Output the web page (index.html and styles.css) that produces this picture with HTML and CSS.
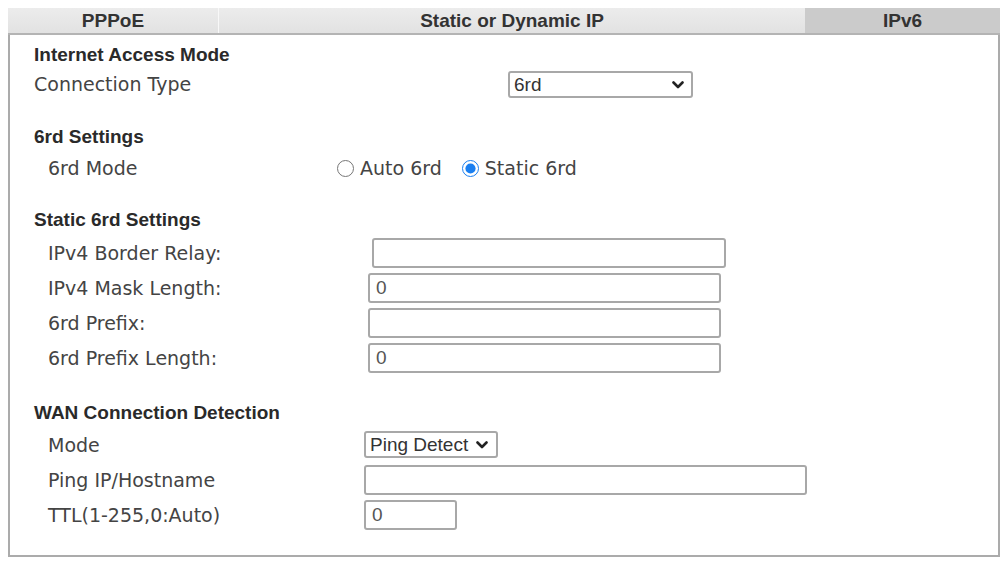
FILE: index.html
```html
<!DOCTYPE html>
<html lang="en">

<head>
  <meta charset="utf-8">
  <title>WAN IPv6</title>
  <link rel="stylesheet" href="styles.css">
</head>

<body>
  <div class="wan">
    <!-- tabs -->
    <div class="tabs">
      <div class="tab tab-pppoe">PPPoE</div>
      <div class="tab tab-ip">Static or Dynamic IP</div>
      <div class="tab tab-v6 active">IPv6</div>
    </div>

    <div class="panel">
      <!-- Internet Access Mode -->
      <div class="head">Internet Access Mode</div>
      <div class="row sec-mode">
        <div class="label flush">Connection Type</div>
        <span class="pick">
          <select class="select select-type">
            <option>6rd</option>
          </select>
          <svg class="chev" width="12" height="8" viewBox="0 0 12 8"><path d="M1.5 1.5 L6 6 L10.5 1.5" fill="none" stroke="#222" stroke-width="2.6" stroke-linecap="round" stroke-linejoin="round"/></svg>
        </span>
      </div>

      <!-- 6rd Settings -->
      <div class="head gap-6rd">6rd Settings</div>
      <div class="row row-radio sec-6rd">
        <div class="label">6rd Mode</div>
        <div class="radios">
          <label class="opt"><input type="radio" name="mode"><span>Auto 6rd</span></label>
          <label class="opt"><input type="radio" name="mode" checked><span>Static 6rd</span></label>
        </div>
      </div>

      <!-- Static 6rd Settings -->
      <div class="head head-static gap-static">Static 6rd Settings</div>
      <div class="row row-input sec-static">
        <div class="label">IPv4 Border Relay:</div>
        <input type="text" class="text text-relay">
      </div>
      <div class="row row-input sec-static">
        <div class="label">IPv4 Mask Length:</div>
        <input type="text" class="text text-long" value="0">
      </div>
      <div class="row row-input sec-static">
        <div class="label">6rd Prefix:</div>
        <input type="text" class="text text-long">
      </div>
      <div class="row row-input sec-static">
        <div class="label">6rd Prefix Length:</div>
        <input type="text" class="text text-long" value="0">
      </div>

      <!-- WAN Connection Detection -->
      <div class="head gap-wan">WAN Connection Detection</div>
      <div class="row row-input sec-wan">
        <div class="label">Mode</div>
        <span class="pick pick-ping">
          <select class="select select-ping">
            <option>Ping Detect</option>
          </select>
          <svg class="chev" width="12" height="8" viewBox="0 0 12 8"><path d="M1.5 1.5 L6 6 L10.5 1.5" fill="none" stroke="#222" stroke-width="2.6" stroke-linecap="round" stroke-linejoin="round"/></svg>
        </span>
      </div>
      <div class="row row-input sec-wan">
        <div class="label">Ping IP/Hostname</div>
        <input type="text" class="text text-host">
      </div>
      <div class="row row-input sec-wan">
        <div class="label">TTL(1-255,0:Auto)</div>
        <input type="text" class="text text-ttl" value="0">
      </div>
    </div>
  </div>
</body>

</html>
```

FILE: styles.css
```css
body {
  margin: 0;
  background: #fff;
  font-family: "DejaVu Sans", Verdana, sans-serif;
  color: #3c3c3c;
}

.wan {
  margin: 8px 0 0 8px;
  width: 992px;
}

/* tabs */
.tabs {
  display: flex;
  height: 25px;
  background: linear-gradient(#ececec, #e2e2e2);
  border-bottom: 2px solid #b4b4b4;
}

.tab {
  font-family: "Liberation Sans", Arial, sans-serif;
  font-weight: bold;
  font-size: 19px;
  line-height: 25px;
  text-align: center;
  color: #333;
}

.tab-pppoe {
  width: 210px;
  border-right: 1px solid #f8f8f8;
}

.tab-ip {
  width: 586px;
}

.tab-v6 {
  width: 195px;
}

.tab.active {
  background: #cbcbcb;
}

/* panel */
.panel {
  border: 2px solid #ababab;
  border-top: none;
  padding: 6px 0 23px 24px;
}

.head {
  height: 28px;
  line-height: 28px;
  font-family: "Liberation Sans", Arial, sans-serif;
  font-weight: bold;
  font-size: 19px;
  color: #2a2a2a;
}

.head-static {
  height: 30px;
  line-height: 30px;
}

.gap-6rd {
  margin-top: 24px;
}

.gap-static {
  margin-top: 20px;
}

.gap-wan {
  margin-top: 24px;
}

.row {
  display: flex;
  align-items: center;
  height: 30px;
}

.row-radio {
  height: 34px;
}

.row-input {
  height: 35px;
}

.label {
  flex: none;
  box-sizing: border-box;
  padding-left: 14px;
  font-size: 19px;
  color: #444;
}

.label.flush {
  padding-left: 0;
}

.sec-mode .label {
  width: 474px;
}

.sec-6rd .label {
  width: 303px;
}

.sec-static .label {
  width: 334px;
}

.sec-wan .label {
  width: 330px;
}

/* controls */
.pick {
  position: relative;
  display: inline-block;
  height: 27px;
}

.chev {
  position: absolute;
  right: 9px;
  top: 10px;
  pointer-events: none;
}

.pick-ping .chev {
  right: 10px;
}

.select {
  appearance: none;
  box-sizing: border-box;
  height: 27px;
  font-family: "Liberation Sans", Arial, sans-serif;
  font-size: 19px;
  color: #333;
  background: #fff;
  border: 2px solid #a8a8a8;
  border-radius: 3px;
  padding: 0 4px;
}

.select-type {
  width: 185px;
}

.select-ping {
  width: 134px;
}

.text {
  box-sizing: border-box;
  height: 30px;
  margin: 0;
  padding: 0 6px;
  font-family: "Liberation Sans", Arial, sans-serif;
  font-size: 19px;
  color: #555;
  background: #fff;
  border: 2px solid #a8a8a8;
  border-radius: 3px;
  outline: none;
}

.text-relay {
  width: 354px;
  margin-left: 4px;
}

.text-long {
  width: 353px;
}

.text-host {
  width: 443px;
}

.text-ttl {
  width: 93px;
}

.radios {
  display: flex;
  gap: 20px;
  font-size: 19px;
  color: #444;
}

.opt {
  display: flex;
  align-items: center;
}

.opt input {
  width: 17px;
  height: 17px;
  margin: 0 6px 0 0;
  accent-color: #1a7ff0;
}
```
